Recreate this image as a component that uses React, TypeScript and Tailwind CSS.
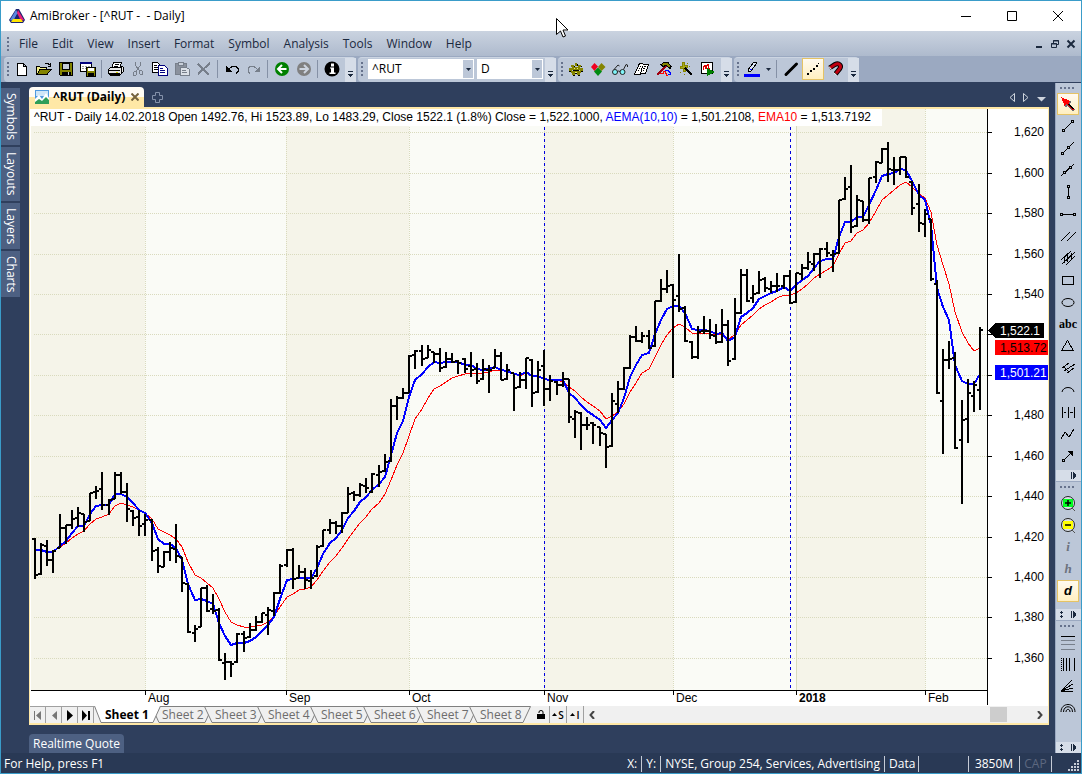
import type { ReactNode } from "react";

// high, low, open, close of every bar, in chart units
const BARS: number[][] = [
  [538, 579, 539, 575], [543, 575, 574, 545], [540, 566, 546, 560], [550, 573, 560, 551], [514, 548, 548, 528],
  [525, 544, 528, 525], [510, 529, 525, 519], [507, 527, 518, 513], [514, 532, 514, 522], [493, 521, 521, 493],
  [486, 499, 492, 491], [472, 510, 489, 505], [499, 515, 505, 500], [472, 499, 499, 475], [472, 494, 475, 492],
  [483, 522, 492, 509], [510, 526, 511, 518], [510, 536, 517, 526], [514, 536, 524, 520], [519, 561, 520, 551],
  [547, 573, 550, 566], [551, 567, 567, 552], [542, 561, 552, 548], [524, 563, 549, 556], [557, 592, 557, 583],
  [583, 633, 584, 632], [625, 642, 633, 629], [588, 627, 627, 588], [585, 612, 588, 611], [594, 614, 609, 611],
  [608, 661, 610, 660], [653, 680, 663, 662], [661, 677, 662, 664], [633, 663, 662, 634], [631, 652, 634, 638],
  [623, 638, 637, 630], [616, 631, 630, 622], [613, 623, 622, 613], [607, 635, 615, 610], [592, 616, 611, 593],
  [564, 594, 593, 566], [549, 567, 565, 550], [548, 589, 550, 579], [565, 578, 578, 572], [568, 589, 572, 580],
  [570, 589, 581, 578], [545, 577, 576, 547], [530, 547, 546, 530], [519, 534, 530, 523], [521, 534, 523, 526],
  [512, 533, 526, 513], [487, 513, 513, 494], [491, 501, 493, 495], [483, 497, 495, 485], [478, 493, 486, 488],
  [473, 493, 492, 474], [465, 487, 475, 472], [454, 472, 471, 462], [399, 462, 461, 406], [396, 420, 406, 398],
  [388, 399, 398, 393], [355, 393, 393, 356], [350, 369, 355, 351], [345, 366, 351, 359], [345, 358, 358, 350],
  [352, 363, 352, 354], [348, 372, 354, 368], [352, 368, 367, 359], [353, 363, 359, 362], [360, 374, 361, 363],
  [358, 373, 359, 369], [352, 377, 366, 370], [363, 384, 369, 381], [359, 380, 379, 369], [365, 393, 370, 370],
  [349, 368, 368, 356], [352, 380, 356, 380], [364, 380, 379, 370], [374, 411, 373, 388], [372, 388, 387, 380],
  [358, 389, 380, 358], [359, 407, 360, 393], [361, 393, 392, 370], [350, 406, 366, 389], [375, 401, 389, 381],
  [381, 395, 382, 385], [372, 387, 385, 379], [379, 423, 379, 417], [410, 438, 419, 412], [412, 450, 413, 425],
  [417, 430, 425, 425], [422, 444, 423, 425], [427, 446, 427, 433], [434, 468, 434, 447], [393, 447, 446, 401],
  [381, 413, 404, 389], [367, 390, 389, 368], [335, 369, 368, 337], [326, 342, 337, 341], [332, 343, 341, 336],
  [330, 349, 336, 348], [301, 347, 346, 301], [279, 302, 301, 289], [270, 293, 289, 286], [284, 378, 285, 300],
  [254, 312, 296, 309], [306, 342, 308, 341], [341, 359, 342, 357], [326, 359, 357, 332], [316, 334, 331, 331],
  [319, 339, 331, 335], [324, 344, 336, 342], [309, 343, 342, 325], [320, 366, 325, 361], [298, 360, 359, 313],
  [269, 314, 313, 275], [269, 302, 275, 301], [285, 303, 298, 294], [271, 294, 293, 280], [277, 292, 279, 288],
  [281, 293, 289, 286], [273, 292, 286, 286], [275, 289, 286, 276], [270, 304, 276, 303], [273, 303, 302, 273],
  [264, 280, 274, 268], [252, 270, 268, 262], [253, 271, 264, 254], [248, 278, 254, 249], [242, 257, 249, 253],
  [250, 272, 255, 254], [200, 254, 253, 200], [177, 200, 199, 189], [165, 233, 187, 227], [195, 227, 226, 200],
  [201, 222, 201, 220], [178, 224, 220, 178], [161, 183, 177, 162], [148, 163, 163, 149], [142, 182, 149, 169],
  [157, 185, 170, 170], [157, 175, 170, 157], [157, 178, 157, 177], [181, 215, 182, 208], [184, 232, 204, 223],
  [209, 237, 224, 214], [219, 281, 219, 279], [280, 394, 284, 393], [349, 454, 401, 360], [341, 369, 360, 359],
  [352, 449, 358, 448], [400, 504, 440, 420], [379, 443, 419, 393], [381, 412, 396, 385], [327, 410, 390, 330],
];

const AEMA = [
  550, 550, 552, 552, 546, 541, 533, 526, 526, 514, 506, 505, 505, 494, 494, 497, 503, 510, 513, 523, 539, 544,
  544, 548, 560, 584, 600, 599, 601, 604, 623, 636, 645, 643, 643, 641, 637, 631, 625, 617, 599, 580, 579, 578,
  578, 578, 568, 554, 543, 538, 530, 518, 511, 502, 497, 490, 484, 477, 455, 433, 421, 397, 380, 374, 367, 362,
  363, 362, 362, 362, 365, 365, 369, 370, 369, 367, 370, 371, 374, 375, 372, 376, 376, 379, 380, 380, 380, 393,
  398, 405, 411, 415, 420, 428, 420, 413, 398, 377, 365, 355, 353, 334, 320, 309, 306, 306, 313, 329, 330, 330,
  331, 334, 333, 341, 337, 317, 313, 308, 299, 296, 293, 291, 287, 291, 285, 280, 276, 268, 261, 259, 259, 237,
  222, 222, 217, 217, 205, 190, 176, 174, 173, 169, 170, 181, 195, 200, 225, 288, 307, 320, 365, 381, 384, 384,
  374,
];

const EMA = [
  550, 550, 552, 552, 547, 543, 538, 534, 531, 524, 519, 517, 514, 506, 503, 505, 507, 510, 513, 519, 529, 532,
  535, 539, 547, 562, 575, 578, 583, 588, 599, 612, 622, 625, 627, 627, 626, 625, 622, 616, 607, 597, 594, 590,
  589, 587, 580, 571, 562, 556, 548, 539, 531, 523, 517, 509, 503, 494, 480, 465, 453, 436, 419, 409, 398, 389,
  386, 382, 378, 376, 374, 373, 374, 373, 372, 370, 370, 371, 374, 376, 373, 375, 376, 379, 379, 380, 382, 387,
  391, 397, 402, 406, 411, 419, 416, 412, 404, 392, 383, 373, 369, 357, 345, 335, 328, 324, 327, 333, 333, 333,
  334, 334, 334, 339, 335, 325, 320, 315, 309, 305, 302, 298, 295, 295, 293, 289, 284, 278, 274, 270, 266, 254,
  243, 241, 233, 230, 223, 211, 200, 195, 190, 185, 182, 187, 194, 198, 212, 245, 265, 284, 312, 332, 343, 351,
  348,
];

const PRICES: [string, number][] = [
  ["1,620", 132], ["1,600", 173], ["1,580", 213], ["1,560", 254], ["1,540", 294], ["", 334], ["", 375],
  ["1,480", 415], ["1,460", 456], ["1,440", 496], ["1,420", 537], ["1,400", 577], ["1,380", 617], ["1,360", 658],
];

const MONTHS: [string, number][] = [
  ["Aug", 145], ["Sep", 286], ["Oct", 409], ["Nov", 544], ["Dec", 673], ["2018", 796], ["Feb", 925],
];

const barX = (i: number) => Math.round(35 + i * 6.136);
const line = (ys: number[]) => ys.map((y, i) => `${barX(i)},${y}`).join(" ");

function Chart() {
  return (
    <svg
      viewBox="30 109 1018 597"
      className="block w-full bg-white font-['Liberation_Sans',sans-serif] text-[12px]"
      shapeRendering="crispEdges"
      role="img"
      aria-label="^RUT daily chart"
    >
      <rect x="34" y="109" width="953" height="581" fill="#fafbf6" />
      <rect x="31" y="109" width="114" height="581" fill="#f5f4e9" />
      <rect x="286" y="109" width="123" height="581" fill="#f5f4e9" />
      <rect x="544" y="109" width="129" height="581" fill="#f5f4e9" />
      <rect x="796" y="109" width="129" height="581" fill="#f5f4e9" />
      <g stroke="#d9dabd" strokeWidth="1" strokeDasharray="1 1">
        {PRICES.map(([, y]) => (
          <path key={y} d={`M34 ${y}.5H987`} />
        ))}
        {MONTHS.map(([m, x]) => (
          <path key={m} d={`M${x}.5 109V690`} strokeDasharray={m === "2018" ? "none" : "1 1"} />
        ))}
      </g>
      <path d="M544.5 109V690M790.5 109V690" stroke="#0000dd" strokeDasharray="3 3" />
      <rect x="31" y="109" width="851" height="17" fill="#fff" />
      <polyline points={line(EMA)} fill="none" stroke="#f00" strokeWidth="1" />
      <polyline points={line(AEMA)} fill="none" stroke="#00f" strokeWidth="2" />
      <g fill="#000">
        {BARS.map(([h, l, o, c], i) => {
          const x = barX(i);
          return (
            <path
              key={i}
              d={`M${x - 1} ${h}h2V${l}h-2zM${x - 3} ${o - 1}h3v2h-3zM${x} ${c - 1}h3v2h-3z`}
            />
          );
        })}
      </g>
      <path d="M987.5 109V705M31 690.5H987" stroke="#000" fill="none" />
      {PRICES.map(([label, y]) => (
        <g key={y}>
          <path d={`M988 ${y}.5h4`} stroke="#000" />
          <text x="1044" y={y + 4} textAnchor="end">
            {label}
          </text>
        </g>
      ))}
      {MONTHS.map(([label, x]) => (
        <g key={label}>
          <path d={`M${x}.5 690v5`} stroke="#000" />
          <text x={x + 3} y="702" className={label === "2018" ? "font-bold" : ""}>
            {label}
          </text>
        </g>
      ))}
      <path d="M988 330.5L995 323h49v15h-49z" fill="#000" />
      <rect x="995" y="340" width="53" height="15" fill="#f00" />
      <rect x="995" y="365" width="53" height="15" fill="#00f" />
      <text x="1000" y="335" fill="#fff">1,522.1</text>
      <text x="1000" y="352">1,513.72</text>
      <text x="1000" y="377" fill="#fff">1,501.21</text>
      <text x="34" y="121">
        ^RUT - Daily 14.02.2018 Open 1492.76, Hi 1523.89, Lo 1483.29, Close 1522.1 (1.8%) Close = 1,522.1000,{" "}
        <tspan fill="#00f">AEMA(10,10)</tspan> = 1,501.2108, <tspan fill="#f00">EMA10</tspan> = 1,513.7192
      </text>
    </svg>
  );
}

function Icon({ children }: { children: ReactNode }) {
  return (
    <svg viewBox="0 0 16 16" className="size-4" fill="none" stroke="#000" shapeRendering="crispEdges" aria-hidden="true">
      {children}
    </svg>
  );
}

function Tool({ label, active, children }: { label: string; active?: boolean; children: ReactNode }) {
  return (
    <button
      type="button"
      aria-label={label}
      className={`flex size-[22px] shrink-0 items-center justify-center ${
        active ? "border border-[#e5c365] bg-linear-to-b from-[#fffaf0] to-[#ffefc0]" : ""
      }`}
    >
      {children}
    </button>
  );
}

function Grip() {
  return (
    <svg viewBox="0 0 2 14" className="mr-[2px] ml-[3px] h-[14px] w-[2px] shrink-0" fill="#66728c" shapeRendering="crispEdges" aria-hidden="true">
      <path d="M0 0h2v2H0zM0 4h2v2H0zM0 8h2v2H0zM0 12h2v2H0z" />
    </svg>
  );
}

function GripH() {
  return (
    <div className="flex h-[10px] items-center pl-[3px]">
      <svg viewBox="0 0 14 2" className="h-[2px] w-[14px]" fill="#66728c" shapeRendering="crispEdges" aria-hidden="true">
        <path d="M0 0h2v2H0zM4 0h2v2H4zM8 0h2v2H8zM12 0h2v2h-2z" />
      </svg>
    </div>
  );
}

function Sep() {
  return <div className="mr-[3px] ml-[2px] h-[18px] w-px shrink-0 bg-[#8591a6]" />;
}

function More() {
  return (
    <button type="button" aria-label="Toolbar options" className="ml-[2px] flex h-6 w-[11px] items-end justify-center self-start bg-[#d6dde8] pb-1">
      <svg viewBox="0 0 7 7" className="size-[7px]" shapeRendering="crispEdges" aria-hidden="true">
        <path d="M1 0h5v1H1zM1 3h5v1H1zM2 4h3v1H2zM3 5h1v1H3z" fill="#1b293e" />
      </svg>
    </button>
  );
}

function MoreH({ both }: { both?: boolean }) {
  return (
    <button type="button" aria-label="Toolbar options" className="flex h-[11px] w-full items-center justify-end bg-[#d6dde8] pr-1">
      <svg viewBox="0 0 18 7" className="h-[7px] w-[18px]" fill="#1b293e" shapeRendering="crispEdges" aria-hidden="true">
        {both && <path d="M2 0h1v1H2zM1 1h3v1H1zM2 2h1v1H2zM2 4h1v1H2zM1 5h3v1H1zM2 6h1v1H2z" />}
        <path d="M12 0h1v7h-1zM14 0h1v7h-1zM15 1h1v5h-1zM16 2h1v3h-1z" />
      </svg>
    </button>
  );
}

function Bar({ children }: { children: ReactNode }) {
  return (
    <div className="h-[25px] rounded-sm border-t border-[#ccd5e2] bg-[#bcc7d8]">
      <div className="flex h-[22px] items-center">{children}</div>
    </div>
  );
}

function Combo({ label, value, className }: { label: string; value: string; className: string }) {
  return (
    <div className={`relative ml-[3px] h-[20px] bg-white ${className}`}>
      <select aria-label={label} className="h-full w-full appearance-none px-1 leading-[20px] text-black outline-none">
        <option>{value}</option>
      </select>
      <span className="pointer-events-none absolute inset-y-px right-px flex w-[10px] items-center justify-center bg-[#bcc7d8]">
        <svg viewBox="0 0 5 3" className="h-[3px] w-[5px]" aria-hidden="true">
          <path d="M0 0h5L2.500 3z" fill="#1b293e" />
        </svg>
      </span>
    </div>
  );
}

function Toolbars() {
  return (
    <div className="flex h-[26px] items-end gap-[2px] bg-[#9ba9c1] pl-[3px]">
      <Bar>
        <Grip />
        <Tool label="New">
          <Icon><path d="M3.500 2.500h6l3 3v9h-9zM9.500 2.500v3h3" fill="#fff" /></Icon>
        </Tool>
        <Tool label="Open">
          <Icon>
            <path d="M.5 13V5.500h3l1 1h6v2" fill="#f4f08a" />
            <path d="M1 13.500L4 8.500h11l-4 5z" fill="#848400" />
            <path d="M8.500 3.500l1-1h3l1 2M14.500 2v3h-3" />
          </Icon>
        </Tool>
        <Tool label="Save">
          <Icon>
            <path d="M1.500 1.500h13v13h-12l-1-1z" fill="#848400" />
            <path d="M4.500 2h7v6h-7z" fill="#c3cbd8" />
            <path d="M4 11h8v3H4z" fill="#000" />
            <path d="M10.500 11v3" stroke="#c3cbd8" />
          </Icon>
        </Tool>
        <Tool label="Save all">
          <Icon>
            <path d="M.5 1.500h11v9H.5z" fill="#fff" />
            <path d="M0 2h12" stroke="#00007f" strokeWidth="2" />
            <path d="M2 5.500h8M2 7.500h8" stroke="#999" strokeDasharray="2 1" />
            <path d="M6.500 6.500h9v9h-9z" fill="#848400" />
            <path d="M8 7h6v3H8z" fill="#fff" stroke="none" />
            <path d="M8 12h6v3H8z" fill="#000" stroke="none" />
          </Icon>
        </Tool>
        <Sep />
        <Tool label="Print">
          <Icon>
            <path d="M5.500 1.500h8l-2 6h-8z" fill="#fff" />
            <path d="M7 3.500h4M6 5.500h4" />
            <path d="M.5 8.500l2-2h10l2-1 1 1v4l-3 3h-10l-2-1z" fill="#e8e8e8" />
            <path d="M1 9.500h11M1 12.500h11M2 14.500h10M13.500 7v6" />
            <path d="M8 11h2v1H8z" fill="#d5d500" stroke="none" />
          </Icon>
        </Tool>
        <Tool label="Cut">
          <Icon>
            <g stroke="#777f8b">
              <path d="M5.500 1v3l3 5M10.500 1v3l-4 6" />
              <path d="M4.500 10.500h2v3l-1 1h-2v-3zM9.500 9.500h2l1 1v3h-2l-1-1z" />
            </g>
          </Icon>
        </Tool>
        <Tool label="Copy">
          <Icon>
            <path d="M.5 1.500h5l2 2v8h-7z" fill="#fff" />
            <path d="M2 4.500h3M2 6.500h4M2 8.500h4" />
            <path d="M6.500 4.500h6l3 3v7h-9z" fill="#fff" stroke="#00007f" />
            <path d="M8 7.500h3M8 9.500h5M8 11.500h5" stroke="#00007f" />
          </Icon>
        </Tool>
        <Tool label="Paste">
          <Icon>
            <path d="M1.500 2.500h11v11h-11z" fill="#8a919d" stroke="#777f8b" />
            <path d="M4.500 1.500h5v3h-5z" fill="#c9d0da" stroke="#777f8b" />
            <path d="M6.500 6.500h6l3 2v6h-9z" fill="#dce1e8" stroke="#777f8b" />
            <path d="M8 9.500h4M8 11.500h5" stroke="#777f8b" />
          </Icon>
        </Tool>
        <Tool label="Delete">
          <Icon><path d="M2 3l11 11M14 2L2 13" stroke="#777f8b" strokeWidth="2" /></Icon>
        </Tool>
        <Sep />
        <Tool label="Undo">
          <Icon>
            <path d="M2 5v6h6z" fill="#000" stroke="none" />
            <path d="M4 9l4-3.500h4l2 2v3l-2 2" />
          </Icon>
        </Tool>
        <Tool label="Redo">
          <Icon>
            <path d="M14 5v6H8z" fill="#777f8b" stroke="none" />
            <path d="M12 9L8 5.500H4L2 7.500v3l2 2" stroke="#777f8b" />
          </Icon>
        </Tool>
        <Sep />
        <Tool label="Back">
          <svg viewBox="0 0 16 16" className="size-4" aria-hidden="true">
            <circle cx="8" cy="8" r="7" fill="#008000" />
            <path d="M12.500 8H4.500M8 4L4 8l4 4" stroke="#fff" strokeWidth="2" fill="none" />
          </svg>
        </Tool>
        <Tool label="Forward">
          <svg viewBox="0 0 16 16" className="size-4" aria-hidden="true">
            <circle cx="8" cy="8" r="7" fill="#808080" />
            <path d="M3.500 8h8M8 4l4 4-4 4" stroke="#cdd4df" strokeWidth="2" fill="none" />
          </svg>
        </Tool>
        <Sep />
        <Tool label="Information">
          <svg viewBox="0 0 16 16" className="size-4" aria-hidden="true">
            <circle cx="8" cy="8" r="7.500" fill="#000" />
            <path d="M7 2.500h3v3H7zM6 6.500h4v5h1.500V13H5.500v-1.500H7v-4H6z" fill="#fff" />
          </svg>
        </Tool>
        <More />
      </Bar>

      <Bar>
        <Grip />
        <Combo label="Symbol" value="^RUT" className="w-[106px]" />
        <Combo label="Interval" value="D" className="w-[66px]" />
        <More />
      </Bar>

      <Bar>
        <Grip />
        <Tool label="Preferences">
          <Icon>
            <path d="M7 2h2v3H7zM3 4h3v2H3zM10 4h3v2h-3zM1 7h3v3H1zM12 7h3v3h-3zM4 6h8v3H4zM3 10h10v2H3zM4 12h3v2H4zM9 12h3v2H9z" fill="#848400" stroke="none" />
            <path d="M9 3h1v2H9zM6 5h1v1H6zM13 5h1v1h-1zM1 10h2v1H1zM13 10h2v1h-2zM5 9h6v1H5zM5 14h2v1H5zM10 14h2v1h-2zM7 12h2v1H7z" fill="#000" stroke="none" />
            <path d="M6 7h1v1H6zM9 7h1v1H9zM7 11h2v1H7z" fill="#ecec7a" stroke="none" />
          </Icon>
        </Tool>
        <Tool label="Categories">
          <svg viewBox="0 0 16 16" className="size-4" aria-hidden="true">
            <path d="M4.500 2L8 5.500 4.500 10 1 6z" fill="#f00020" />
            <path d="M11.500 2L15.500 6l-4 4L8 6z" fill="#848400" />
            <path d="M8 6.500l4 4L8 15l-4-4.500z" fill="#008a10" />
          </svg>
        </Tool>
        <Tool label="Watch">
          <svg viewBox="0 0 16 16" className="size-4" fill="none" stroke="#222" aria-hidden="true">
            <circle cx="3" cy="11" r="2.500" fill="#7ff4f8" />
            <circle cx="10.500" cy="11" r="2.500" fill="#7ff4f8" />
            <path d="M5.500 10.500q1.200-1 2.500 0M2 8.500l4-4.500 1.500 1M11.500 8.500l2.500-5 1.500.5v2" />
          </svg>
        </Tool>
        <Tool label="Notes">
          <Icon>
            <path d="M5.500 2.500h3l1 1h5l-3 9h-4l-1 1h-6z" fill="#fff" />
            <path d="M8.500 5l-2 8M6 5.500h1M5 7.500h1M4 9.500h1M10 5.500h2M9 7.500h2M9 9.500h1" />
          </Icon>
        </Tool>
        <Tool label="Formula editor">
          <Icon>
            <path d="M10 5L1 14" stroke="#a00010" strokeWidth="2" />
            <path d="M5 3.500l3-2h4l3 4-1 2-4-3-3 1z" fill="#848400" />
            <path d="M4 12.500h3v-2h2l1 2v2h2" stroke="#f00" strokeWidth="1" />
            <path d="M9 9.500h3l2 2v2h-2" stroke="#00f" />
          </Icon>
        </Tool>
        <Tool label="Wizard">
          <Icon>
            <path d="M4 1h2v3h3v2H7v4H5V7H2V5h2z" fill="#a9a91a" stroke="#848400" />
            <path d="M9 2.500h1M2 11.500h1M11 5.500h1M6 13.500h1" stroke="#848400" />
            <path d="M7 7l7 7" strokeWidth="2" />
          </Icon>
        </Tool>
        <Tool label="Run analysis">
          <Icon>
            <path d="M1.500 1.500h11v11h-11z" fill="#fff" />
            <path d="M3.500 9V5.500h1v-1h1v3h1v-3h1v-1h1v4h1" stroke="#d00" />
            <path d="M7 7l8 4-8 4z" fill="#008000" stroke="none" />
          </Icon>
        </Tool>
        <More />
      </Bar>

      <Bar>
        <Grip />
        <Tool label="Line colour">
          <Icon>
            <path d="M4 9L10 1l3 1-6 8-3 1z" fill="#dce7f7" />
            <path d="M6 8l2 1" stroke="#00f" />
            <path d="M0 13h16v3H0z" fill="#00f" stroke="none" />
          </Icon>
        </Tool>
        <button type="button" aria-label="Choose colour" className="flex h-[22px] w-[11px] items-center justify-center">
          <svg viewBox="0 0 5 3" className="h-[3px] w-[5px]" aria-hidden="true">
            <path d="M0 0h5L2.500 3z" fill="#1b293e" />
          </svg>
        </button>
        <Sep />
        <Tool label="Thickness">
          <svg viewBox="0 0 16 16" className="size-4" aria-hidden="true">
            <path d="M3 13.500L13.500 3" stroke="#000" strokeWidth="3" strokeLinecap="round" />
          </svg>
        </Tool>
        <Tool label="Line style" active>
          <Icon><path d="M2 12h2v2H2zM5 9h2v2H5zM8 7h2v2H8zM11 4h2v2h-2zM13 2h1v1h-1z" fill="#000" stroke="none" /></Icon>
        </Tool>
        <Tool label="Magnet">
          <svg viewBox="0 0 16 16" className="size-4" fill="none" aria-hidden="true">
            <path d="M2.500 7L8 3.500c4-2 7 1 4.500 4.500L8.500 13" stroke="#000" strokeWidth="5" />
            <path d="M3 6.700L8 3.500c4-2 7 1 4.500 4.500L9 12.400" stroke="#c00010" strokeWidth="3" />
            <path d="M2 5.500l2.500 3M6.500 11.500l3 2.500" stroke="#fff" strokeWidth="1" />
          </svg>
        </Tool>
        <More />
      </Bar>
    </div>
  );
}

function DrawingTools() {
  return (
    <div className="flex w-[26px] shrink-0 flex-col gap-px bg-[#9ba9c1] pl-px text-[12px]">
      <div className="flex flex-col bg-[#bcc7d8] pl-px">
        <GripH />
        <Tool label="Select" active>
          <Icon>
            <path d="M3 3l9 3-3 2 6 6-2 1-6-5-1 3z" fill="#6b7078" stroke="none" />
            <path d="M1 1l9 4-2 2 6 6-1 1-7-6-1 3z" fill="#f00" stroke="none" />
            <path d="M8.500 8l5 5" />
          </Icon>
        </Tool>
        <Tool label="Trend line">
          <Icon><path d="M4 12l8-8" /><path d="M2.500 11.500h2v2h-2zM11.500 2.500h2v2h-2z" fill="#bcc7d8" /></Icon>
        </Tool>
        <Tool label="Ray">
          <Icon><path d="M3 13L14 2" /><path d="M1.500 12.500h2v2h-2zM7.500 6.500h2v2h-2z" fill="#bcc7d8" /></Icon>
        </Tool>
        <Tool label="Extended line">
          <Icon><path d="M1 14L14 2" /><path d="M3.500 9.500h2v2h-2zM9.500 4.500h2v2h-2z" fill="#bcc7d8" /></Icon>
        </Tool>
        <Tool label="Vertical line">
          <Icon><path d="M8.500 3v10" /><path d="M7.500 1.500h2v2h-2zM7.500 12.500h2v2h-2z" fill="#bcc7d8" /></Icon>
        </Tool>
        <Tool label="Horizontal line">
          <Icon><path d="M2 8.500h12" /><path d="M.5 7.500h2v2h-2zM13.500 7.500h2v2h-2z" fill="#bcc7d8" /></Icon>
        </Tool>
        <Tool label="Parallel lines">
          <Icon><path d="M1 13l9-9M7 13l9-9" /></Icon>
        </Tool>
        <Tool label="Regression channel">
          <Icon><path d="M1 10l10-9M2 14L15 2M6 15l9-9M4.500 7v6M7.500 5v7M11.500 3v6" /></Icon>
        </Tool>
        <Tool label="Rectangle">
          <Icon><path d="M2.500 4.500h11v8h-11z" /></Icon>
        </Tool>
        <Tool label="Ellipse">
          <svg viewBox="0 0 16 16" className="size-4" fill="none" stroke="#000" aria-hidden="true"><ellipse cx="8" cy="8.500" rx="6" ry="4" /></svg>
        </Tool>
        <Tool label="Text"><span className="font-['Liberation_Serif',serif] text-[12px] font-bold text-black">abc</span></Tool>
        <Tool label="Triangle">
          <Icon><path d="M7.500 2.500l6 10h-12z" /></Icon>
        </Tool>
        <Tool label="Pitchfork">
          <Icon><path d="M2 8l7-5M4 11l11-7M7 13l7-5M3 6l6 6" /></Icon>
        </Tool>
        <Tool label="Arc">
          <svg viewBox="0 0 16 16" className="size-4" fill="none" stroke="#000" aria-hidden="true"><path d="M2 10c1-6 11-6 12 0" /></svg>
        </Tool>
        <Tool label="Cycles">
          <Icon><path d="M2.500 3v11M8.500 3v11M14.500 3v11M4 8.500h2M10 8.500h3" /></Icon>
        </Tool>
        <Tool label="Zigzag">
          <Icon><path d="M1 13l4-7 4 5 5-8" /></Icon>
        </Tool>
        <Tool label="Arrow">
          <Icon><path d="M4 12l6-6" /><path d="M13 3v6L7 3z" fill="#000" stroke="none" /><path d="M2.500 11.500h2v2h-2z" fill="#bcc7d8" /></Icon>
        </Tool>
        <div className="mt-[3px] -ml-px"><MoreH /></div>
      </div>
      <div className="flex flex-col bg-[#bcc7d8] pl-px">
        <GripH />
        <Tool label="Zoom in">
          <svg viewBox="0 0 16 16" className="size-4" aria-hidden="true">
            <circle cx="8" cy="8" r="6.500" fill="#dce1e8" stroke="#222" />
            <path d="M3 4h10v8H3z" fill="#0f2" />
            <path d="M5 8h6M8 5v6" stroke="#000" strokeWidth="1.500" />
            <path d="M12 13l3 3" stroke="#555" />
          </svg>
        </Tool>
        <Tool label="Zoom out">
          <svg viewBox="0 0 16 16" className="size-4" aria-hidden="true">
            <circle cx="8" cy="8" r="6.500" fill="#dce1e8" stroke="#222" />
            <path d="M3 4h10v8H3z" fill="#ff0" />
            <path d="M5 8h6" stroke="#000" strokeWidth="1.500" />
            <path d="M12 13l3 3" stroke="#555" />
          </svg>
        </Tool>
        <Tool label="Intraday"><i className="font-['Liberation_Serif',serif] text-[13px] font-bold text-[#6c727e]">i</i></Tool>
        <Tool label="Hourly"><i className="font-['Liberation_Serif',serif] text-[13px] font-bold text-[#6c727e]">h</i></Tool>
        <Tool label="Daily" active><i className="font-['Liberation_Sans',sans-serif] text-[13px] font-bold text-black">d</i></Tool>
        <div className="-ml-px mt-[7px]"><MoreH both /></div>
      </div>
      <div className="flex flex-1 flex-col bg-[#bcc7d8] pl-px">
        <GripH />
        <Tool label="Fibonacci retracement">
          <Icon><path d="M1 2.500h14" /><path d="M1 6.500h14M1 10.500h14M1 15.500h14" stroke="#777f8b" /></Icon>
        </Tool>
        <Tool label="Fibonacci time zones">
          <Icon><path d="M1.500 2v13" strokeDasharray="1 1" /><path d="M3.500 2v13M6.500 2v13M9.500 2v13M14.500 2v13" /></Icon>
        </Tool>
        <Tool label="Gann fan">
          <Icon><path d="M1 13L12 2M1 13l12-7M1 13l12-3M1 13.500h12" /></Icon>
        </Tool>
        <Tool label="Fibonacci arcs">
          <svg viewBox="0 0 16 16" className="size-4" fill="none" stroke="#000" aria-hidden="true">
            <path d="M1 12c0-10 14-10 14 0M3.500 12c0-7 9-7 9 0M6 12c0-3.500 4-3.500 4 0" />
          </svg>
        </Tool>
        <div className="-ml-px mt-auto"><MoreH both /></div>
      </div>
    </div>
  );
}

function SheetTab({ name, active }: { name: string; active?: boolean }) {
  return (
    <button
      type="button"
      className={`relative h-[17px] shrink-0 pl-[11px] text-left ${
        active ? "z-10 w-[57px] font-bold text-black" : "w-[53px] text-[#6d6d6d]"
      }`}
    >
      <svg
        viewBox={active ? "0 0 67 17" : "0 0 62 17"}
        className={`absolute top-0 left-0 h-[17px] ${active ? "w-[67px]" : "w-[62px]"}`}
        stroke="#808080"
        aria-hidden="true"
      >
        {active ? <path d="M.5 0L7 16.500h52L66.500 0" fill="#fff" /> : <path d="M.5.500L8 16.500h46L61.500.500z" fill="#f0f0f0" />}
      </svg>
      <span className="relative block leading-[15px] whitespace-nowrap">{name}</span>
    </button>
  );
}

function SheetBar() {
  const nav: [string, string, string][] = [
    ["First sheet", "M2 2h1v9H2zM9 2v9L4 6.500z", "#777"],
    ["Previous sheet", "M9 2v9L4 6.500z", "#777"],
    ["Next sheet", "M3 1v11l6-5.500z", "#000"],
    ["Last sheet", "M2 1v11l5-5.500zM8 2h2v9H8z", "#000"],
  ];
  return (
    <div className="flex h-[17px] bg-[#f0f0f0] text-[12px]">
      <div className="flex shrink-0 border-t border-[#a0a0a0]">
        {nav.map(([label, d, color]) => (
          <button key={label} type="button" aria-label={label} className="flex w-4 items-center justify-center border-r border-[#a0a0a0]">
            <svg viewBox="0 0 12 13" className="h-[13px] w-3" fill={color} aria-hidden="true">
              <path d={d} />
            </svg>
          </button>
        ))}
      </div>
      <div className="flex w-[439px] shrink-0">
        <SheetTab name="Sheet 1" active />
        {[2, 3, 4, 5, 6, 7, 8].map((n) => (
          <SheetTab key={n} name={`Sheet ${n}`} />
        ))}
      </div>
      <button type="button" aria-label="Lock" className="flex w-[17px] shrink-0 items-center justify-center border-r border-[#a0a0a0]">
        <svg viewBox="0 0 8 9" className="h-[9px] w-2" aria-hidden="true">
          <path d="M0 4h8v5H0z" />
          <path d="M2 3V2q0-1.500 2-1.500t2 1.500v2" fill="none" stroke="#000" />
        </svg>
      </button>
      {["S", "I"].map((s) => (
        <button key={s} type="button" className="flex w-[17px] shrink-0 items-center justify-center gap-px border-r border-[#a0a0a0] text-[10px] font-semibold">
          <svg viewBox="0 0 5 3" className="h-[3px] w-[5px]" aria-hidden="true">
            <path d="M0 3h5L2.500 0z" />
          </svg>
          {s}
        </button>
      ))}
      <div className="flex min-w-0 flex-1 items-center justify-between px-[5px]">
        <button type="button" aria-label="Scroll left">
          <svg viewBox="0 0 6 8" className="h-2 w-[6px]" fill="none" stroke="#444" strokeWidth="2" aria-hidden="true">
            <path d="M5 0L1.500 4 5 8" />
          </svg>
        </button>
        <div className="mr-[30px] ml-auto h-[15px] w-[17px] bg-[#cdcdcd]" />
        <button type="button" aria-label="Scroll right">
          <svg viewBox="0 0 6 8" className="h-2 w-[6px]" fill="none" stroke="#444" strokeWidth="2" aria-hidden="true">
            <path d="M1 0l3.500 4L1 8" />
          </svg>
        </button>
      </div>
    </div>
  );
}

const MENUS = ["File", "Edit", "View", "Insert", "Format", "Symbol", "Analysis", "Tools", "Window", "Help"];

const SIDE_TABS: [string, string][] = [
  ["Symbols", "h-[57px]"],
  ["Layouts", "h-[54px]"],
  ["Layers", "h-[46px]"],
  ["Charts", "h-[46px]"],
];

export default function App() {
  return (
    <div className="relative flex min-h-screen w-full flex-col border border-[#3a9cc9] bg-[#2f3f5d] font-['Open_Sans','Noto_Sans',sans-serif] text-[12px] leading-4">
      <header className="flex h-[30px] items-center bg-white pl-2">
        <svg viewBox="0 0 16 16" className="size-4" aria-hidden="true">
          <path d="M7 1h3l6 11-2 3H2l-2-3z" fill="#1d2470" />
          <path d="M7 2L1 12l3 1 5-8z" fill="#5a86e0" />
          <path d="M9 2l6 10-3 1-4-8z" fill="#e8207a" />
          <path d="M2 14l2-3h8l2 3z" fill="#ffe600" />
          <path d="M8 6l2 4H6z" fill="#1d2470" />
        </svg>
        <h1 className="ml-[5px] whitespace-pre text-black">AmiBroker - [^RUT -  - Daily]</h1>
        <div className="ml-auto flex">
          <button type="button" aria-label="Minimize" className="flex h-[30px] w-[46px] items-center justify-center">
            <svg viewBox="0 0 10 10" className="size-[10px]" stroke="#000" aria-hidden="true"><path d="M0 5.500h10" /></svg>
          </button>
          <button type="button" aria-label="Maximize" className="flex h-[30px] w-[46px] items-center justify-center">
            <svg viewBox="0 0 10 10" className="size-[10px]" fill="none" stroke="#000" aria-hidden="true"><path d="M.5.500h9v9h-9z" /></svg>
          </button>
          <button type="button" aria-label="Close" className="flex h-[30px] w-[46px] items-center justify-center">
            <svg viewBox="0 0 10 10" className="size-[10px]" stroke="#000" aria-hidden="true"><path d="M0 0l10 10M10 0L0 10" /></svg>
          </button>
        </div>
      </header>

      <nav className="flex h-[25px] items-center bg-linear-to-b from-[#cad3e0] to-[#aebacd] pl-[3px] text-[#1b293e]">
        <Grip />
        <div className="flex pl-px">
          {MENUS.map((m) => (
            <button key={m} type="button" className="px-[7px]">
              {m}
            </button>
          ))}
        </div>
        <div className="ml-auto flex gap-[6px] pr-[5px]">
          <button type="button" aria-label="Minimize document">
            <svg viewBox="0 0 10 10" className="size-[10px]" aria-hidden="true"><path d="M2 7h6v2H2z" fill="#1b293e" /></svg>
          </button>
          <button type="button" aria-label="Restore document">
            <svg viewBox="0 0 10 10" className="size-[10px]" fill="none" stroke="#1b293e" aria-hidden="true">
              <path d="M3.500 4V1.500h5v4H6M3 2h6M1.500 4.500h5v4h-5zM1 5h6" />
            </svg>
          </button>
          <button type="button" aria-label="Close document">
            <svg viewBox="0 0 10 10" className="size-[10px]" stroke="#1b293e" strokeWidth="2" aria-hidden="true"><path d="M1.500 1.500l7 7M8.500 1.500l-7 7" /></svg>
          </button>
        </div>
      </nav>

      <Toolbars />

      <div className="flex flex-1">
        <aside className="flex w-7 shrink-0 flex-col gap-[2px] pt-[6px] text-white">
          {SIDE_TABS.map(([name, h]) => (
            <button key={name} type="button" className={`flex w-[19px] items-center justify-center bg-[#4d6082] [writing-mode:vertical-rl] ${h}`}>
              {name}
            </button>
          ))}
        </aside>

        <main className="flex min-w-0 flex-1 flex-col">
          <div className="flex h-[25px] items-end">
            <div className="flex h-5 items-center rounded-t-sm bg-linear-to-b from-[#fffcf4] from-50% to-[#ffe8a6] to-50% pr-[5px] pl-[6px]">
              <svg viewBox="0 0 14 14" className="size-[14px]" aria-hidden="true">
                <path d="M0 0h14v14H0z" fill="#4f9be0" />
                <path d="M1 1h12v5H1z" fill="#cfe6f7" />
                <path d="M0 9l4-4 3 4 4-6 3 5v6H0z" fill="#fff" />
                <path d="M0 12l4-3 3 2 4-4 3 3v4H0z" fill="#2f9e58" />
              </svg>
              <span className="ml-1 font-bold whitespace-nowrap text-black">^RUT (Daily)</span>
              <button type="button" aria-label="Close tab" className="ml-[6px]">
                <svg viewBox="0 0 8 8" className="size-2" stroke="#75633d" strokeWidth="2" aria-hidden="true"><path d="M.5.500l7 7M7.500.500l-7 7" /></svg>
              </button>
            </div>
            <button type="button" aria-label="New tab" className="flex h-5 items-center pl-2">
              <svg viewBox="0 0 11 11" className="size-[11px]" fill="none" stroke="#8592aa" aria-hidden="true">
                <path d="M3.500.500h4v3h3v4h-3v3h-4v-3h-3v-4h3z" />
              </svg>
            </button>
            <div className="ml-auto flex h-5 items-center gap-2 pr-[3px]">
              <button type="button" aria-label="Previous tab">
                <svg viewBox="0 0 6 9" className="h-[9px] w-[6px]" fill="none" stroke="#ced4dd" aria-hidden="true"><path d="M5.500.500v8L1 4.500z" /></svg>
              </button>
              <button type="button" aria-label="Next tab">
                <svg viewBox="0 0 6 9" className="h-[9px] w-[6px]" fill="none" stroke="#ced4dd" aria-hidden="true"><path d="M.5.500v8L5 4.500z" /></svg>
              </button>
              <button type="button" aria-label="Tab list">
                <svg viewBox="0 0 9 9" className="size-[9px]" fill="#ced4dd" aria-hidden="true"><path d="M0 4h9L4.500 8.500z" /></svg>
              </button>
            </div>
          </div>
          <div className="border-x border-y-2 border-[#ffe8a6]">
            <Chart />
            <SheetBar />
          </div>
          <div className="mt-[9px] flex">
            <button type="button" className="h-[19px] rounded-t-sm bg-[#4d6082] px-1 text-white">
              Realtime Quote
            </button>
          </div>
        </main>

        <div className="ml-[6px] flex pt-px">
          <DrawingTools />
        </div>
      </div>

      <footer className="flex h-5 items-center bg-[#293955] pt-px pl-[3px] text-white">
        <span>For Help, press F1</span>
        <div className="ml-auto flex h-4 items-center">
          <span className="px-1">X:</span>
          <span className="border-l border-[#c5cbd6] px-1">Y:</span>
          <span className="border-l border-[#c5cbd6] px-1">NYSE, Group 254, Services, Advertising</span>
          <span className="w-[34px] border-l border-[#c5cbd6] px-1">Data</span>
          <span className="h-4 w-[50px] border-l border-[#c5cbd6]" />
          <span className="w-[51px] border-l border-[#c5cbd6] text-center">3850M</span>
          <span className="w-[33px] border-x border-[#c5cbd6] text-center text-[#5d6880]">CAP</span>
        </div>
        <svg viewBox="0 0 11 11" className="mt-1 mr-[2px] ml-4 size-[11px]" fill="#c5cbd6" shapeRendering="crispEdges" aria-hidden="true">
          <path d="M9 0h2v2H9zM6 3h2v2H6zM9 3h2v2H9zM3 6h2v2H3zM6 6h2v2H6zM9 6h2v2H9zM0 9h2v2H0zM3 9h2v2H3zM6 9h2v2H6zM9 9h2v2H9z" />
        </svg>
      </footer>

      <svg viewBox="0 0 12 20" className="absolute top-[17px] left-[555px] h-5 w-3" aria-hidden="true">
        <path d="M.5.500v16l4-3.500 2.500 6 2.500-1-2.500-6h5z" fill="#fff" stroke="#000" />
      </svg>
    </div>
  );
}
